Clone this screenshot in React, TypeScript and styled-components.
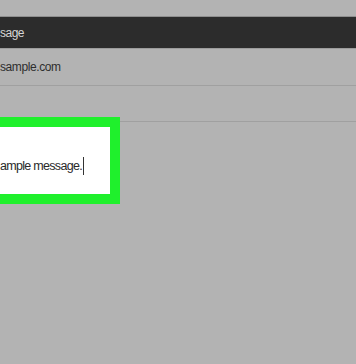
import styled, { createGlobalStyle } from 'styled-components'

const GlobalStyle = createGlobalStyle`
  html, body {
    margin: 0;
    padding: 0;
    background: #b3b3b3;
    overflow: hidden;
  }
  body {
    font-family: "Liberation Sans", Arial, sans-serif;
  }
`

const Page = styled.div`
  width: 356px;
  height: 364px;
  display: flex;
  flex-direction: column;
  overflow: hidden;
  background: #b3b3b3;
`

const TopGap = styled.div`
  height: 16px;
  border-bottom: 1px solid #8f8f8f;
`

const TitleBar = styled.div`
  height: 31px;
  background: #2c2c2c;
  border-bottom: 1px solid #9c9c9c;
  display: flex;
  align-items: center;
  overflow: hidden;
`

const Title = styled.span`
  font-size: 12px;
  letter-spacing: -0.5px;
  color: #d6d6d6;
  white-space: nowrap;
`

const FieldRow = styled.div<{ $height: number }>`
  height: ${p => p.$height}px;
  border-bottom: 1px solid #a0a0a0;
  display: flex;
  align-items: center;
  overflow: hidden;
`

const FieldText = styled.span`
  font-size: 12px;
  letter-spacing: -0.4px;
  color: #2e2e2e;
  white-space: nowrap;
`

// green annotation frame, pulled up so it covers the row line above it
const Highlight = styled.div`
  margin: -5px 0 0 -10px;
  width: 110px;
  height: 37px;
  border: 10px solid #1ff02c;
  background: #ffffff;
  display: flex;
  align-items: flex-start;
  padding-top: 30px;
  box-sizing: content-box;
  position: relative;
  z-index: 1;
`

const MessageText = styled.span`
  font-size: 12.5px;
  line-height: 16px;
  letter-spacing: -0.7px;
  color: #2a2a2a;
  white-space: nowrap;
  display: flex;
  align-items: center;
`

const Caret = styled.span`
  display: inline-block;
  width: 1px;
  height: 18px;
  margin-left: 1px;
  background: #333333;
`

export default function App() {
  return (
    <>
      <GlobalStyle />
      <Page>
        <TopGap />
        <TitleBar>
          <Title>sage</Title>
        </TitleBar>
        <FieldRow $height={36}>
          <FieldText>sample.com</FieldText>
        </FieldRow>
        <FieldRow $height={35} />
        <Highlight>
          <MessageText>
            ample message.
            <Caret />
          </MessageText>
        </Highlight>
      </Page>
    </>
  )
}
